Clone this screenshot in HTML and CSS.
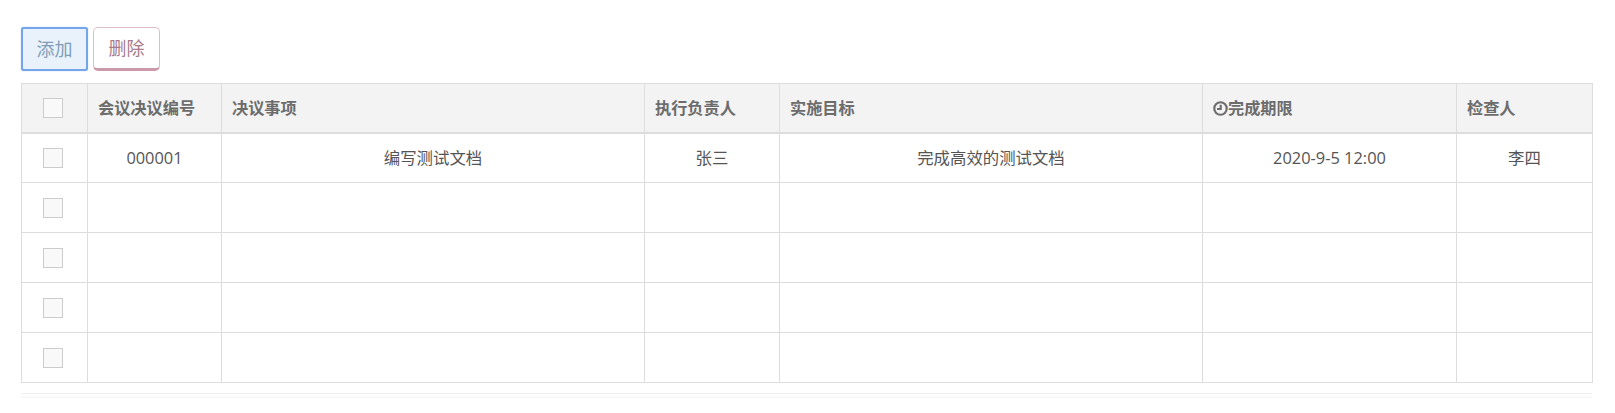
FILE: index.html
```html
<!DOCTYPE html>
<html lang="en">

<head>
    <meta charset="UTF-8">
    <title>会议决议</title>
    <link rel="stylesheet" href="styles.css">
</head>

<body>
    <div class="toolbar">
        <button class="btn btn-add">添加</button>
        <button class="btn btn-delete">删除</button>
    </div>

    <table class="grid">
        <colgroup>
            <col class="col-check">
            <col class="col-no">
            <col class="col-item">
            <col class="col-owner">
            <col class="col-goal">
            <col class="col-date">
            <col class="col-checker">
        </colgroup>
        <thead>
            <tr>
                <th class="cell-check"><span class="checkbox"></span></th>
                <th>会议决议编号</th>
                <th>决议事项</th>
                <th>执行负责人</th>
                <th>实施目标</th>
                <th>
                    <svg class="clock" viewBox="0 0 14 14">
                        <circle cx="7" cy="7" r="5.8"></circle>
                        <path d="M7.2 3.4V7.5H3.8"></path>
                    </svg>完成期限
                </th>
                <th>检查人</th>
            </tr>
        </thead>
        <tbody>
            <tr>
                <td class="cell-check"><span class="checkbox"></span></td>
                <td>000001</td>
                <td>编写测试文档</td>
                <td>张三</td>
                <td>完成高效的测试文档</td>
                <td>2020-9-5 12:00</td>
                <td>李四</td>
            </tr>
            <tr>
                <td class="cell-check"><span class="checkbox"></span></td>
                <td></td><td></td><td></td><td></td><td></td><td></td>
            </tr>
            <tr>
                <td class="cell-check"><span class="checkbox"></span></td>
                <td></td><td></td><td></td><td></td><td></td><td></td>
            </tr>
            <tr>
                <td class="cell-check"><span class="checkbox"></span></td>
                <td></td><td></td><td></td><td></td><td></td><td></td>
            </tr>
            <tr>
                <td class="cell-check"><span class="checkbox"></span></td>
                <td></td><td></td><td></td><td></td><td></td><td></td>
            </tr>
        </tbody>
    </table>

    <div class="pager-strip"></div>
</body>

</html>
```

FILE: styles.css
```css
* {
    margin: 0;
    padding: 0;
    box-sizing: border-box;
}

body {
    font-family: "Open Sans", "Noto Sans CJK SC", sans-serif;
    color: #555;
    background: white;
    padding: 27px 23px 0 21px;
    overflow: hidden;
}

.toolbar {
    display: flex;
    gap: 5px;
    margin-bottom: 12px;
}

.btn {
    width: 67px;
    height: 44px;
    padding-bottom: 2px;
    font-family: inherit;
    font-size: 18px;
    border-radius: 3px;
    background: white;
}

.btn-add {
    color: #7f9db8;
    background: #e9f2fb;
    border: 2px solid #74a5ea;
    box-shadow: 0 0 1px #74a5ea;
}

.btn-delete {
    color: #a87a8c;
    border: 1px solid #dfbcc9;
    border-bottom: 3px solid #cc99ab;
    border-radius: 5px;
}

.grid {
    width: 1571px;
    table-layout: fixed;
    border-collapse: collapse;
}

.col-check { width: 66px; }
.col-no { width: 134px; }
.col-item { width: 423px; }
.col-owner { width: 135px; }
.col-goal { width: 423px; }
.col-date { width: 254px; }
.col-checker { width: 136px; }

.grid th,
.grid td {
    border: 1px solid #ddd;
}

.grid th {
    height: 49px;
    padding: 0 10px 2px;
    font-size: 16.2px;
    font-weight: bold;
    color: #6c6c6c;
    text-align: left;
    background: #f3f3f3;
    border-bottom: 2px solid #ddd;
}

.grid td {
    height: 50px;
    padding: 0 10px 1px;
    font-size: 16.4px;
    text-align: center;
}

.grid .cell-check {
    text-align: center;
    padding: 0 3px 0 0;
}

.checkbox {
    display: block;
    width: 20px;
    height: 20px;
    margin: 0 auto;
    background: #f9f9f9;
    border: 1px solid #ccc;
}

.clock {
    width: 15px;
    height: 15px;
    vertical-align: -2px;
    fill: none;
    stroke: #6c6c6c;
    stroke-width: 2;
}

.pager-strip {
    width: 1571px;
    height: 5px;
    margin-top: 10px;
    background: #fcfcfc;
    border-top: 1px solid #f0f0f0;
    border-bottom: 1px solid #f6f6f6;
}
```
